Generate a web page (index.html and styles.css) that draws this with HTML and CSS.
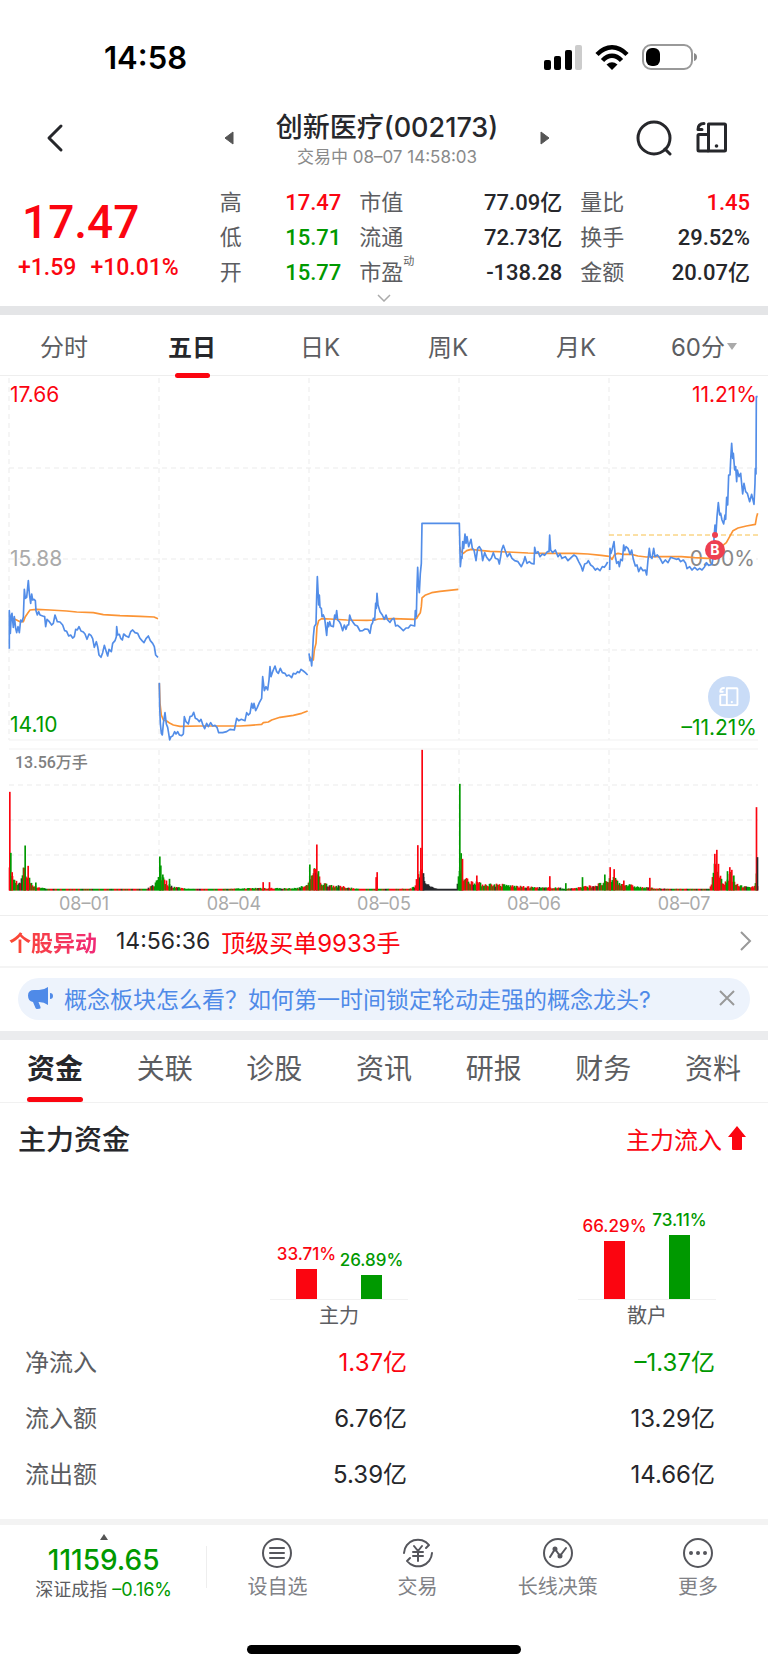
FILE: index.html
```
<!DOCTYPE html>
<html lang="zh-CN">
<head>
    <meta charset="UTF-8">
    <meta name="viewport" content="width=device-width, initial-scale=1">
    <title>创新医疗(002173)</title>
    <link rel="stylesheet" href="styles.css">
</head>
<body>
    <!-- shared icon -->
    <svg class="defs" width="0" height="0" aria-hidden="true">
        <symbol id="split" viewBox="0 0 32 32">
            <g fill="none" stroke="currentColor" stroke-width="3" stroke-linejoin="round">
                <path d="M12.5 2h16q1 0 1 1v25q0 1-1 1h-16z"/>
                <path d="M12.5 12.5H3q-1 0-1 1V28q0 1 1 1h9.500"/>
                <path d="M8 1.500C4.500 1.500 2 3.500 2 7.500h4" stroke-linecap="round"/>
            </g>
            <circle cx="20.500" cy="24" r="1.800" fill="currentColor"/>
        </symbol>
    </svg>

    <div class="status">
        <span class="clock">14:58</span>
        <div class="signals">
            <svg width="38" height="25" viewBox="0 0 38 25">
                <rect x="0" y="15" width="7" height="10" rx="2"/>
                <rect x="10" y="11" width="7" height="14" rx="2"/>
                <rect x="21" y="5" width="7" height="20" rx="2"/>
                <rect x="31" y="0" width="7" height="25" rx="2" fill="#ccc"/>
            </svg>
            <svg width="34" height="25" viewBox="0 0 34 25">
                <g fill="none" stroke="#000" stroke-width="4.500">
                    <path d="M2 9.500Q9 2.300 17 2.300T32 9.500"/>
                    <path d="M7.500 15.500Q12 10.800 17 10.800T26.500 15.500"/>
                </g>
                <path d="M11.500 19.500Q17 15 22.500 19.500L17 25z"/>
            </svg>
            <svg width="55" height="26" viewBox="0 0 55 26">
                <rect x="1" y="1" width="49" height="24" rx="8" fill="none" stroke="#999" stroke-width="2"/>
                <rect x="4" y="4" width="14" height="18" rx="6"/>
                <path d="M52 9q3 1 3 4t-3 4z" fill="#888"/>
            </svg>
        </div>
    </div>

    <header class="header">
        <button class="icon-btn" aria-label="返回">
            <svg width="18" height="30" viewBox="0 0 18 30"><path d="M15 3L3 15l12 12" fill="none" stroke="currentColor" stroke-width="3" stroke-linecap="round" stroke-linejoin="round"/></svg>
        </button>
        <div class="stock">
            <button class="icon-btn" aria-label="上一只"><svg width="10" height="14" viewBox="0 0 10 14"><path d="M9 1v12L1 7z" fill="#555" stroke="#555" stroke-linejoin="round"/></svg></button>
            <div class="stock-name">
                <h1>创新医疗(002173)</h1>
                <p>交易中 08–07 14:58:03</p>
            </div>
            <button class="icon-btn" aria-label="下一只"><svg width="10" height="14" viewBox="0 0 10 14"><path d="M1 1v12l8-6z" fill="#555" stroke="#555" stroke-linejoin="round"/></svg></button>
        </div>
        <div class="tools">
            <button class="icon-btn" aria-label="搜索">
                <svg width="36" height="36" viewBox="0 0 36 36"><g fill="none" stroke="currentColor" stroke-width="3"><circle cx="18" cy="18" r="16"/><path d="M29 29l5 5" stroke-linecap="round"/></g></svg>
            </button>
            <button class="icon-btn" aria-label="分屏"><svg width="32" height="32"><use href="#split"/></svg></button>
        </div>
    </header>

    <section class="quote">
        <div class="price">
            <strong>17.47</strong>
            <p><span>+1.59</span><span>+10.01%</span></p>
        </div>
        <dl>
            <div><dt>高</dt><dd class="red">17.47</dd></div>
            <div><dt>低</dt><dd class="green">15.71</dd></div>
            <div><dt>开</dt><dd class="green">15.77</dd></div>
        </dl>
        <dl>
            <div><dt>市值</dt><dd>77.09亿</dd></div>
            <div><dt>流通</dt><dd>72.73亿</dd></div>
            <div><dt>市盈<sup>动</sup></dt><dd>-138.28</dd></div>
        </dl>
        <dl>
            <div><dt>量比</dt><dd class="red">1.45</dd></div>
            <div><dt>换手</dt><dd>29.52%</dd></div>
            <div><dt>金额</dt><dd>20.07亿</dd></div>
        </dl>
    </section>
    <button class="expand" aria-label="展开"><svg width="14" height="8" viewBox="0 0 14 8"><path d="M1 1l6 6 6-6" fill="none" stroke="#aaa" stroke-width="1.500"/></svg></button>

    <nav class="periods">
        <button>分时</button>
        <button class="active">五日</button>
        <button>日K</button>
        <button>周K</button>
        <button>月K</button>
        <button>60分<svg width="10" height="10" viewBox="0 0 10 10"><path d="M0 3h10L5 10z" fill="#aaa"/></svg></button>
    </nav>

    <section class="chart">
        <svg class="plot" viewBox="0 0 768 539">
            <g class="grid">
                <path d="M9 2v362M159 2v362M309 2v362M459 2v362M609 2v362M9 92h749M9 183h749M9 274h749"/>
                <path d="M159 374v140M309 374v140M459 374v140M609 374v140M9 409h749M9 444h749M9 479h749"/>
            </g>
            <path class="frame" d="M9 364h749M9 373h749"/>
            <g class="axis">
                <text class="up" x="10" y="26">17.66</text>
                <text class="flat" x="10" y="190">15.88</text>
                <text class="down" x="10" y="356">14.10</text>
                <text class="up" x="757" y="26" text-anchor="end">11.21%</text>
                <text class="zero" x="755" y="190" text-anchor="end">0.00%</text>
                <text class="down" x="757" y="359" text-anchor="end">–11.21%</text>
            </g>
            <path class="level" d="M609 159h149"/>
            <!-- average price and last price, one pair per day -->
            <g class="avg">
                <g transform="translate(0 -6) scale(.33333)">
                    <polyline points="28,750 45,748 60,755 70,755 76,740 84,728 90,720 110,718 150,720 200,723 230,726 280,728 310,734 360,737 420,739 462,741 474,746"/>
                    <polyline points="478,940 480,1000 484,1035 490,1050 500,1053 510,1060 520,1065 540,1069 600,1068 720,1068 750,1066 785,1063 790,1058 805,1056 815,1050 840,1042 880,1036 905,1030 923,1023"/>
                </g>
                <g transform="translate(250 -6) scale(.33333)">
                    <polyline points="179,860 185,868 190,870 193,840 198,820 201,770 206,752 215,746 240,747 290,750 350,751 375,750 385,747 430,746 495,748 500,745 504,738 511,728 514,710 516,684 525,676 545,668 570,664 625,658"/>
                    <polyline points="629,530 633,545 640,550 650,542 663,538 690,541 720,544 774,546 834,549 884,550 974,550 1014,552 1054,556 1077,559"/>
                </g>
                <g transform="translate(508 -6) scale(.33333)">
                    <polyline points="305,560 312,568 320,553 330,550 345,553 370,553 390,558 415,561 450,560 520,560 560,563 600,565 620,560 640,530 655,518 665,500 675,482 690,474 715,468 742,463 746,440 749,430"/>
                </g>
            </g>
            <g class="last">
                <g transform="translate(0 -6) scale(.33333)">
                    <polyline points="28,836 28,722 31,790 34,735 36,730 40,772 43,740 47,775 50,788 54,770 58,788 62,750 66,755 70,742 73,658 76,685 80,682 85,632 88,670 92,700 95,672 98,690 102,688 106,692 108,722 112,735 116,725 120,735 128,738 134,740 137,770 141,748 148,755 155,765 160,760 165,735 172,755 180,756 188,765 194,782 200,784 206,798 212,795 218,804 223,800 227,778 232,780 237,770 243,783 250,786 255,792 261,808 267,792 273,796 278,806 283,832 289,815 293,830 297,855 303,862 308,848 313,826 318,842 323,858 327,838 334,845 338,820 345,812 349,800 350,770 353,795 358,793 362,805 367,810 371,792 378,798 386,802 392,785 398,780 405,788 413,790 420,805 426,812 432,818 438,806 445,798 451,812 458,820 463,830 467,855 474,862"/>
                    <polyline points="478,938 479,1010 481,1060 484,1090 487,1095 490,1060 495,1028 499,1062 503,1072 506,1090 509,1110 513,1100 518,1098 524,1085 528,1092 533,1085 538,1095 545,1097 550,1092 553,1040 558,1055 565,1062 570,1040 576,1038 581,1027 586,1045 592,1048 598,1055 603,1048 608,1063 614,1076 620,1060 625,1070 632,1058 638,1068 645,1066 651,1072 656,1088 668,1088 680,1085 690,1078 703,1080 707,1060 710,1045 716,1052 724,1048 735,1052 740,1028 745,1035 750,1030 755,1000 759,1015 762,1000 767,1022 772,1012 778,998 785,985 788,920 793,962 798,950 803,960 807,930 810,890 813,920 818,905 825,888 830,905 835,910 841,895 847,908 855,910 860,918 867,915 875,923 880,910 887,912 893,905 898,908 903,898 910,903 916,908 923,915"/>
                </g>
                <g transform="translate(250 -6) scale(.33333)">
                    <polyline points="177,850 180,872 183,868 185,888 187,860 190,800 193,770 198,762 200,680 202,620 204,660 206,705 208,675 210,712 214,715 216,740 220,735 224,745 228,780 230,796 233,758 236,770 239,755 243,768 250,770 254,735 257,745 260,722 263,750 268,755 272,762 278,782 283,765 288,778 292,765 296,765 299,735 303,748 310,758 315,765 322,768 330,783 338,782 345,777 354,778 360,790 364,765 368,758 370,745 374,750 377,700 379,715 381,670 384,705 390,725 397,735 403,748 408,735 413,750 420,757 426,748 432,745 437,768 443,766 452,774 460,782 468,774 475,774 482,765 494,768 496,722 499,740 501,650 503,592 505,640 508,668 511,610 514,580 516,460 628,460 631,590 634,560 636,565 638,515 641,535 645,492 648,520 651,500 656,530 663,508 667,535 672,540 678,572 683,535 688,530 694,540 698,572 704,548 710,562 718,572 724,565 730,548 736,565 744,568 748,582 752,560 755,540 760,526 765,540 772,560 779,550 786,565 794,572 804,575 814,590 821,575 825,560 831,580 838,575 844,580 852,582 854,532 858,550 864,545 870,560 877,552 884,556 892,545 897,545 899,495 902,540 908,548 916,540 924,560 930,552 936,565 946,560 954,572 964,562 972,555 979,560 986,575 994,590 998,603 1004,582 1010,580 1015,572 1022,585 1029,590 1036,600 1042,595 1050,602 1057,590 1063,592 1068,585 1073,576"/>
                </g>
                <g transform="translate(508 -6) scale(.33333)">
                    <polyline points="305,600 306,535 309,550 312,540 318,515 322,560 326,580 331,575 334,590 338,568 343,572 347,525 350,542 354,530 360,535 366,553 371,540 376,568 382,588 387,585 392,605 398,592 405,602 412,600 416,615 420,570 424,535 427,560 432,565 437,535 441,560 448,555 456,565 464,580 472,570 480,578 488,562 496,565 505,568 512,566 518,575 526,570 533,580 537,596 545,590 552,600 560,592 568,600 575,595 582,600 590,590 595,578 602,586 612,583 616,560 618,505 621,465 624,490 627,440 631,398 635,435 638,430 642,450 647,462 651,435 653,448 656,382 659,405 662,315 666,315 668,270 671,220 674,265 676,250 680,300 683,290 686,335 688,300 693,320 698,310 704,372 708,340 713,365 718,370 725,395 731,373 738,403 741,340 742,295 744,312 745,80 749,80"/>
                </g>
            </g>
            <circle cx="715" cy="159" r="3" fill="#ee3f50"/>
            <circle cx="715" cy="174" r="10" fill="#ee3f50"/>
            <text class="mark" x="715" y="179" text-anchor="middle">B</text>
            <g id="volume" transform="translate(0 514.500) scale(.33333)"></g>
            <text class="vol-max" x="15" y="392">13.56万手</text>
            <g class="dates">
                <text x="84" y="534">08–01</text>
                <text x="234" y="534">08–04</text>
                <text x="384" y="534">08–05</text>
                <text x="534" y="534">08–06</text>
                <text x="684" y="534">08–07</text>
            </g>
        </svg>
        <button class="float-btn" aria-label="分屏"><svg width="20" height="20"><use href="#split"/></svg></button>
    </section>

    <a class="alert" href="#">
        <b>个股异动</b>
        <span class="time">14:56:36</span>
        <span class="red">顶级买单9933手</span>
        <svg width="12" height="20" viewBox="0 0 12 20"><path d="M1 1l9 9-9 9" fill="none" stroke="#999" stroke-width="2"/></svg>
    </a>

    <div class="tip-wrap">
        <div class="tip">
            <svg width="26" height="22" viewBox="0 0 26 22">
                <path d="M20 0v18q-4-3-9-3h-.5l2 5q.5 1.500-1 1.800l-2.500.2q-1 0-1.500-1L5 15Q0 14 0 8.500T6 3h5q5 0 9-3zM22 6q3 0 3 3t-3 3z" fill="#4f8ae8"/>
            </svg>
            <a href="#">概念板块怎么看？如何第一时间锁定轮动走强的概念龙头?</a>
            <button class="icon-btn" aria-label="关闭"><svg width="16" height="16" viewBox="0 0 16 16"><path d="M1 1l14 14M15 1L1 15" stroke="#999" stroke-width="2"/></svg></button>
        </div>
    </div>

    <nav class="sections">
        <button class="active">资金</button>
        <button>关联</button>
        <button>诊股</button>
        <button>资讯</button>
        <button>研报</button>
        <button>财务</button>
        <button>资料</button>
    </nav>

    <section class="funds">
        <div class="funds-head">
            <h2>主力资金</h2>
            <span class="red">主力流入<svg width="18" height="24" viewBox="0 0 18 24"><path d="M9 0l9 11h-4v12q0 1-1 1H5q-1 0-1-1V11H0z" fill="currentColor"/></svg></span>
        </div>
        <div class="flows">
            <figure>
                <div class="bars">
                    <div class="bar red"><span>33.71%</span><i style="height:30px"></i></div>
                    <div class="bar green"><span>26.89%</span><i style="height:24px"></i></div>
                </div>
                <figcaption>主力</figcaption>
            </figure>
            <figure>
                <div class="bars">
                    <div class="bar red"><span>66.29%</span><i style="height:58px"></i></div>
                    <div class="bar green"><span>73.11%</span><i style="height:64px"></i></div>
                </div>
                <figcaption>散户</figcaption>
            </figure>
        </div>
        <table>
            <tr><th scope="row">净流入</th><td class="red">1.37亿</td><td class="green">–1.37亿</td></tr>
            <tr><th scope="row">流入额</th><td>6.76亿</td><td>13.29亿</td></tr>
            <tr><th scope="row">流出额</th><td>5.39亿</td><td>14.66亿</td></tr>
        </table>
    </section>

    <footer class="bottom">
        <button class="index">
            <svg width="8" height="6" viewBox="0 0 8 6"><path d="M4 0l4 6H0z" fill="#555"/></svg>
            <strong>11159.65</strong>
            <span>深证成指 <em>–0.16%</em></span>
        </button>
        <button class="action">
            <svg width="32" height="32" viewBox="0 0 32 32"><circle cx="16" cy="16" r="14"/><path d="M9 11h14M9 16h14M9 21h14"/></svg>
            设自选
        </button>
        <button class="action">
            <svg width="32" height="32" viewBox="0 0 32 32"><path d="M2 16A14 14 0 0 1 27 8l-3 3M30 16A14 14 0 0 1 5 24l3-3M12 9l4 5 4-5M11 15h10M11 19h10M16 15v9"/></svg>
            交易
        </button>
        <button class="action">
            <svg width="32" height="32" viewBox="0 0 32 32"><circle cx="16" cy="16" r="14"/><path d="M8 20l5-8 5 7 6-8"/><circle class="dot" cx="13" cy="12" r="1.500"/><circle class="dot" cx="18" cy="19" r="1.500"/></svg>
            长线决策
        </button>
        <button class="action">
            <svg width="32" height="32" viewBox="0 0 32 32"><circle cx="16" cy="16" r="14"/><path d="M9 16h.01M16 16h.01M23 16h.01" stroke-width="4"/></svg>
            更多
        </button>
    </footer>
    <div class="home-bar"></div>

    <script src="volume.js"></script>
</body>
</html>
```
FILE: styles.css
```
* { box-sizing: border-box; }
body { margin: 0; background: #fff; color: #26272b; font-family: Inter, "Noto Sans CJK SC", sans-serif; font-size: 24px; }
h1, h2, p, dl, dd, figure { margin: 0; }
button { padding: 0; border: none; background: none; color: inherit; font: inherit; cursor: pointer; }
a { color: inherit; text-decoration: none; }
svg { display: block; }
.defs { position: absolute; }
.red { color: #fb0510; }
.green { color: #009900; }
.icon-btn { display: flex; }

.status { display: flex; justify-content: space-between; align-items: center; height: 96px; padding: 18px 71px 0 104px; color: #000; }
.clock { font-size: 31px; font-weight: 600; }
.signals { display: flex; align-items: center; gap: 13px; }

.header { display: grid; grid-template-columns: 1fr auto 1fr; align-items: center; height: 84px; padding: 0 40px 0 46px; }
.stock { display: flex; align-items: center; gap: 42px; }
.stock-name { padding-top: 4px; text-align: center; }
h1 { font-size: 27px; font-weight: 500; line-height: 34px; }
.stock-name p { color: #8a8a8a; font-size: 17px; line-height: 24px; }
.tools { display: flex; justify-content: flex-end; align-items: center; gap: 24px; }

.quote { display: grid; grid-template-columns: 183fr 121fr 202fr 169fr; gap: 18px; padding: 5px 18px 0; font-family: Roboto, "Noto Sans CJK SC", sans-serif; }
.price { color: #fb0510; font-weight: 500; }
.price strong { display: block; padding: 12px 0 0 4px; font-size: 46px; font-weight: 500; line-height: 50px; }
.price p { display: flex; gap: 14px; font-size: 23px; line-height: 42px; }
dl div { display: flex; justify-content: space-between; line-height: 35px; font-size: 22px; }
dt { color: #5c5d61; }
dd { font-weight: 500; }
sup { font-size: 11px; line-height: 0; vertical-align: 15px; }
.expand { display: flex; justify-content: center; width: 100%; height: 16px; padding-top: 4px; }

.periods { display: flex; height: 70px; border-top: 9px solid #e4e5e7; border-bottom: 1px solid #eee; }
.periods button { position: relative; display: flex; flex: 1; align-items: center; justify-content: center; gap: 2px; color: #5c5d61; }
.periods .active, .sections .active { color: #26272b; font-weight: 700; }
.periods .active::after { content: ""; position: absolute; bottom: -3px; width: 35px; height: 5px; border-radius: 3px; background: #fb0510; }

.chart { position: relative; border-bottom: 1px solid #eee; }
.plot { width: 100%; height: auto; }
.grid { fill: none; stroke: #ebebeb; stroke-dasharray: 5 4; }
.frame { stroke: #f1f1f1; }
.axis { font-size: 21px; }
.up { fill: #fb0510; }
.flat { fill: #aaa; }
.zero { fill: #888; }
.down { fill: #009900; }
.level { stroke: #f7c04a; stroke-dasharray: 5 3; }
.avg, .last { fill: none; stroke-width: 5; stroke-linejoin: round; }
.avg { stroke: #fb9435; }
.last { stroke: #528de8; }
.mark { fill: #fff; font-size: 14px; font-weight: 700; }
.vol-max { fill: #808080; font: 500 16px Roboto, "Noto Sans CJK SC", sans-serif; }
.dates { fill: #aaa; font-size: 18px; text-anchor: middle; }
.float-btn { position: absolute; right: 18px; bottom: 197px; display: flex; align-items: center; justify-content: center; width: 42px; height: 42px; border-radius: 50%; background: #c9dcf7; color: #fff; }

.alert { display: flex; align-items: center; gap: 11px; height: 52px; padding: 0 16px 0 9px; border-bottom: 2px solid #f4f4f4; }
.alert b { margin-right: 8px; background: linear-gradient(90deg, #fb4a30, #f02a78); background-clip: text; color: transparent; font-size: 22px; }
.alert .time { font-size: 23px; }
.alert svg { margin-left: auto; }

.tip-wrap { padding: 10px 18px 11px; }
.tip { display: flex; align-items: center; gap: 10px; height: 42px; padding: 0 15px 2px 10px; border-radius: 21px; background: #edf3fc; color: #4f8ae8; font-size: 23px; white-space: nowrap; }
.tip .icon-btn { margin-left: auto; }

.sections { display: flex; justify-content: space-between; height: 72px; padding: 0 27px; border-top: 9px solid #ebecee; border-bottom: 1px solid #f1f1f1; font-size: 28px; color: #5c5d61; }
.sections button { position: relative; padding-bottom: 8px; }
.sections .active::after { content: ""; position: absolute; bottom: 0; left: 0; width: 100%; height: 5px; border-radius: 3px; background: #fb0510; }

.funds-head { display: flex; justify-content: space-between; align-items: center; height: 70px; padding: 0 22px 0 18px; }
h2 { font-size: 28px; font-weight: 500; }
.funds-head span { display: flex; align-items: center; gap: 6px; }
.flows { display: flex; justify-content: flex-end; gap: 170px; padding: 4px 52px 0 0; }
.flows figure { width: 138px; }
.bars { display: flex; justify-content: center; align-items: flex-end; gap: 3px; height: 123px; border-bottom: 1px solid #f1f1f1; }
.bar { display: flex; flex-direction: column; align-items: center; width: 62px; font-size: 17px; font-weight: 500; line-height: 30px; }
.bar i { width: 21px; background: currentColor; }
figcaption { color: #5c5d61; font-size: 20px; line-height: 32px; text-align: center; }
table { width: 100%; border-collapse: collapse; table-layout: fixed; }
th, td { height: 56px; padding: 0; text-align: right; font-weight: 400; }
th { width: 26%; padding-left: 25px; color: #5c5d61; text-align: left; }
td:nth-child(2) { width: 27%; }
td:last-child { padding-right: 53px; }

.bottom { display: flex; height: 101px; margin-top: 19px; border-top: 6px solid #f3f3f3; }
.index { position: relative; display: flex; flex-direction: column; align-items: center; width: 27%; padding-top: 9px; font-size: 18px; }
.index::after { content: ""; position: absolute; right: 0; top: 21px; width: 1px; height: 42px; background: #eee; }
.index strong { color: #009900; font-size: 28px; font-weight: 500; line-height: 40px; }
.index span { color: #5c5d61; line-height: 20px; }
.index em { color: #009900; font-style: normal; }
.action { display: flex; flex: 1; flex-direction: column; align-items: center; padding-top: 12px; color: #808186; font-size: 20px; line-height: 36px; }
.action svg { fill: none; stroke: #55565c; stroke-width: 2; stroke-linecap: round; stroke-linejoin: round; }
.action .dot { fill: #55565c; }
.home-bar { width: 274px; height: 9px; margin: 25px auto 14px; border-radius: 5px; background: #000; }
```
FILE: volume.js
```
const RED = '#fb0510';
const GREEN = '#009900';
const BLACK = '#26272b';

// typical level of the session: [x, height]
const levels = [
    [28, 60], [40, 35], [60, 20], [70, 60], [80, 50], [90, 30], [105, 12], [130, 8], [150, 3],
    [440, 4], [465, 20], [478, 50], [495, 30], [510, 15], [530, 10], [560, 6], [600, 3], [700, 5],
    [780, 8], [880, 6], [920, 15], [930, 40], [945, 60], [955, 45], [965, 22], [1000, 15], [1040, 10],
    [1080, 4], [1230, 5], [1245, 15], [1250, 50], [1262, 60], [1270, 40], [1280, 20], [1300, 8],
    [1330, 3], [1370, 4], [1380, 90], [1388, 40], [1410, 28], [1430, 28], [1440, 20], [1500, 18],
    [1560, 12], [1640, 8], [1660, 10], [1700, 5], [1740, 10], [1780, 15], [1820, 25], [1840, 40],
    [1860, 22], [1920, 10], [1990, 5], [2130, 4], [2142, 80], [2155, 60], [2170, 20], [2190, 50],
    [2205, 20], [2240, 10], [2262, 15], [2270, 50], [2273, 3]
];

// peaks: [x, height, color]
const peaks = [
    [29, 296, RED], [32, 113, GREEN], [36, 55, RED], [72, 68, RED], [75, 135, GREEN], [84, 74, RED],
    [107, 24, GREEN], [479, 102, GREEN], [482, 75, GREEN], [488, 48, GREEN], [508, 35, GREEN],
    [789, 25, RED], [808, 25, RED], [929, 78, GREEN], [942, 65, RED], [950, 138, RED], [955, 58, GREEN],
    [1128, 40, RED], [1131, 55, RED], [1253, 136, RED], [1262, 128, RED], [1266, 422, RED],
    [1270, 52, BLACK], [1379, 320, GREEN], [1383, 112, GREEN], [1387, 95, RED], [1430, 45, RED],
    [1649, 43, RED], [1697, 22, GREEN], [1747, 40, GREEN], [1814, 48, GREEN], [1830, 70, RED],
    [1842, 64, RED], [1871, 30, RED], [1949, 38, RED], [2144, 110, RED], [2150, 122, RED],
    [2155, 80, RED], [2182, 58, GREEN], [2189, 70, RED], [2195, 62, RED], [2201, 45, GREEN],
    [2269, 250, RED], [2272, 100, BLACK]
];

const volume = document.getElementById('volume');

function addBar(x, height, color) {
    const bar = document.createElementNS('http://www.w3.org/2000/svg', 'rect');
    bar.setAttribute('x', x - 2);
    bar.setAttribute('y', -height);
    bar.setAttribute('width', 5);
    bar.setAttribute('height', height);
    bar.setAttribute('fill', color);
    volume.appendChild(bar);
}

let seed = 7;
function random() {
    seed = (seed * 16807) % 2147483647;
    return seed / 2147483647;
}

let i = 0;
for (let x = 28; x < 2273; x += 3) {
    while (x >= levels[i + 1][0]) i++;
    const [x0, h0] = levels[i];
    const [x1, h1] = levels[i + 1];
    const level = h0 + (h1 - h0) * (x - x0) / (x1 - x0);
    const pick = random();
    let color = pick < 0.47 ? RED : pick < 0.92 ? GREEN : BLACK;
    if (x > 1268 && x < 1375) color = BLACK;
    addBar(x, Math.max(5, level * (0.6 + random() * 0.6)), color);
}
peaks.forEach(peak => addBar(...peak));
```
